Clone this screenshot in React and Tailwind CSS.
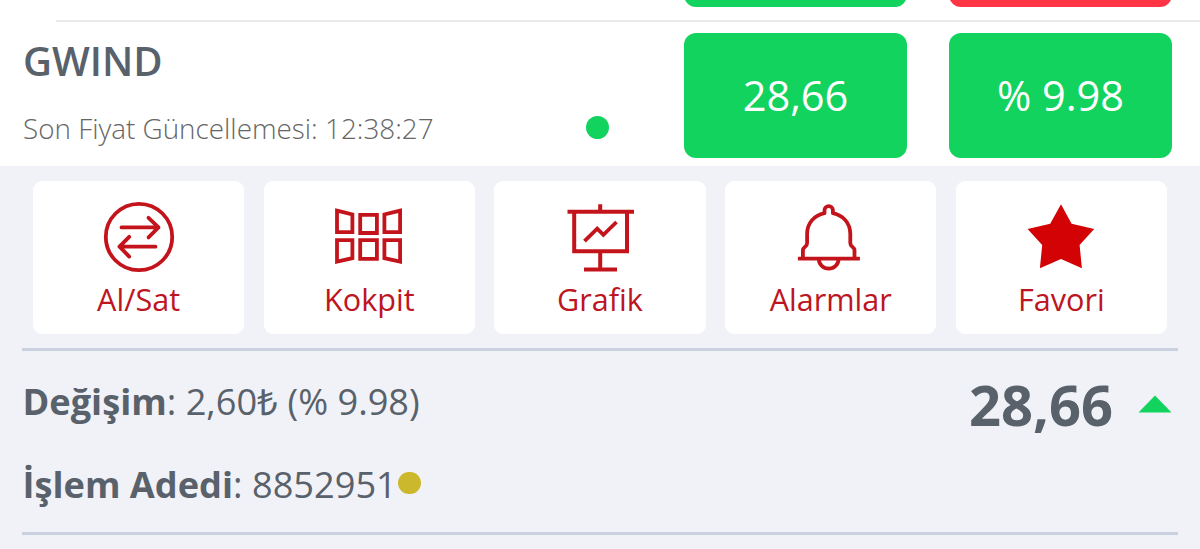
const actions = [
  { label: "Al/Sat", icon: TradeIcon },
  { label: "Kokpit", icon: CockpitIcon },
  { label: "Grafik", icon: ChartIcon },
  { label: "Alarmlar", icon: BellIcon },
  { label: "Favori", icon: StarIcon },
];

function TradeIcon() {
  return (
    <svg width="80" height="76" viewBox="0 0 80 76" fill="none" stroke="#c3141b" strokeWidth="3.8" strokeLinecap="round" strokeLinejoin="round">
      <circle cx="40" cy="37" r="33.2" />
      <path d="M22.5 27.4H59.5M49.5 17.8L59.5 27.4L49.5 37.4" />
      <path d="M56.5 46.7H20.5M30.2 36.8L20.5 46.7L30.2 56.6" />
    </svg>
  );
}

function CockpitIcon() {
  return (
    <svg width="80" height="76" viewBox="0 0 80 76" fill="none" stroke="#c3141b" strokeWidth="3.8">
      <path d="M8 10.6L23.4 14.4V32.2H8Z" />
      <path d="M31.2 14.8H47.9V33H31.2Z" />
      <path d="M71.1 10.6L55.4 14.4V32.2H71.1Z" />
      <path d="M8 61.7L23.4 58.2V40.1H8Z" />
      <path d="M31.2 40.1H47.9V58.9H31.2Z" />
      <path d="M71.1 61.7L55.4 58.2V40.1H71.1Z" />
    </svg>
  );
}

function ChartIcon() {
  return (
    <svg width="80" height="76" viewBox="0 0 80 76" fill="none" stroke="#c3141b" strokeWidth="4">
      <path d="M40.2 4.3V12M7.5 11.8H74" />
      <path d="M14.2 12V51.3H67V12" />
      <path d="M40.2 51V69.5M24 69.5H57" />
      <path d="M24.5 41.2L37.2 28.6L43.4 34.8L56.5 22" strokeWidth="3.8" />
    </svg>
  );
}

function BellIcon() {
  return (
    <svg width="80" height="76" viewBox="0 0 80 76" fill="none" stroke="#c3141b" strokeWidth="3.8" strokeLinejoin="round">
      <path d="M11.9 58V50.5C11.9 48.5 12.7 47.8 14.1 46.8C15.5 45.8 16.1 45 16.1 43V34C16.1 23 23 15.6 33.5 13.2V10.3A4.2 4.2 0 0 1 41.9 10.3V13.2C52.4 15.6 59.3 23 59.3 34V43C59.3 45 59.9 45.8 61.3 46.8C62.7 47.8 63.5 48.5 63.5 50.5V58" />
      <path d="M6.9 58.7H68.9" />
      <path d="M27.9 59.2A9.8 9.4 0 0 0 47.5 59.2" />
    </svg>
  );
}

function StarIcon() {
  return (
    <svg width="80" height="76" viewBox="0 0 80 76" fill="#d20205">
      <path d="M40 4.3L50.6 23.7L73.2 29L58.6 45L60.9 68.3L40 59L18.9 68.3L21.2 45L6.6 29L29.2 23.7Z" />
    </svg>
  );
}

function Pill({ children }) {
  return (
    <div className="flex h-[125px] w-[223px] items-center justify-center rounded-[12px] bg-[#11d35e] text-[41.5px] text-white">
      {children}
    </div>
  );
}

function App() {
  return (
    <div className="h-[549px] w-[1200px] overflow-hidden bg-[#f1f2f7] font-['Open_Sans',sans-serif] text-[#59616b]">
      <div className="h-[166px] bg-white">
        {/* bottom edge of the previous row */}
        <div className="flex h-[20px] items-start justify-end gap-[42px] overflow-hidden pr-7">
          <div className="-mt-5 h-[27px] w-[223px] rounded-b-[12px] bg-[#11d35e]" />
          <div className="-mt-5 h-[27px] w-[223px] rounded-b-[12px] bg-[#ff3546]" />
        </div>
        <div className="ml-14 h-[2px] bg-[#e9eaeb]" />

        <div className="flex pr-7 pl-[23px] pt-[10.5px]">
          <div className="w-[563px]">
            <h1 className="pt-[1.5px] text-[40px] leading-[54px] font-semibold">GWIND</h1>
            <p className="mt-[21px] text-[27.85px] leading-[38px] font-light whitespace-nowrap text-[#666]">
              Son Fiyat Güncellemesi: 12:38:27
            </p>
          </div>
          <div className="mt-[83.5px] size-[22.5px] rounded-full bg-[#11d35e]" />
          <div className="ml-auto flex gap-[42px]">
            <Pill>28,66</Pill>
            <Pill>% 9.98</Pill>
          </div>
        </div>
      </div>

      <div className="px-[22px]">
        <div className="grid grid-cols-5 gap-[19.5px] pr-[11px] pl-[11px] pt-[14.5px]">
          {actions.map(({ label, icon: Icon }) => (
            <button key={label} className="flex h-[153.5px] flex-col items-center rounded-[9px] bg-white pt-[19.5px]">
              <Icon />
              <span className="mt-[3px] text-[30.6px] leading-[40px] text-[#bd1522]">{label}</span>
            </button>
          ))}
        </div>

        <div className="mt-[14px] flex h-[187px] justify-between border-y-[3px] border-[#c8d1dd] pt-[23px]">
          <div className="pl-[0.5px] text-[36.2px] leading-[50px]">
            <p className="pt-[2px]">
              <b>Değişim</b>: 2,60₺ (% 9.98)
            </p>
            <p className="mt-[33px] flex items-center">
              <span>
                <b>İşlem Adedi</b>: 8852951
              </span>
              <span className="mb-[2px] ml-[1.5px] size-[22.5px] rounded-full bg-[#cbb82c]" />
            </p>
          </div>
          <div className="flex h-[59px] items-center pr-[6px]">
            <span className="text-[56px] leading-[76px] font-bold">28,66</span>
            <svg className="ml-[25px]" width="34" height="18" viewBox="0 0 34 18" fill="#11d35e">
              <path d="M17 0.5L33.5 17.5H0.5Z" />
            </svg>
          </div>
        </div>
      </div>
    </div>
  );
}

export default App;
